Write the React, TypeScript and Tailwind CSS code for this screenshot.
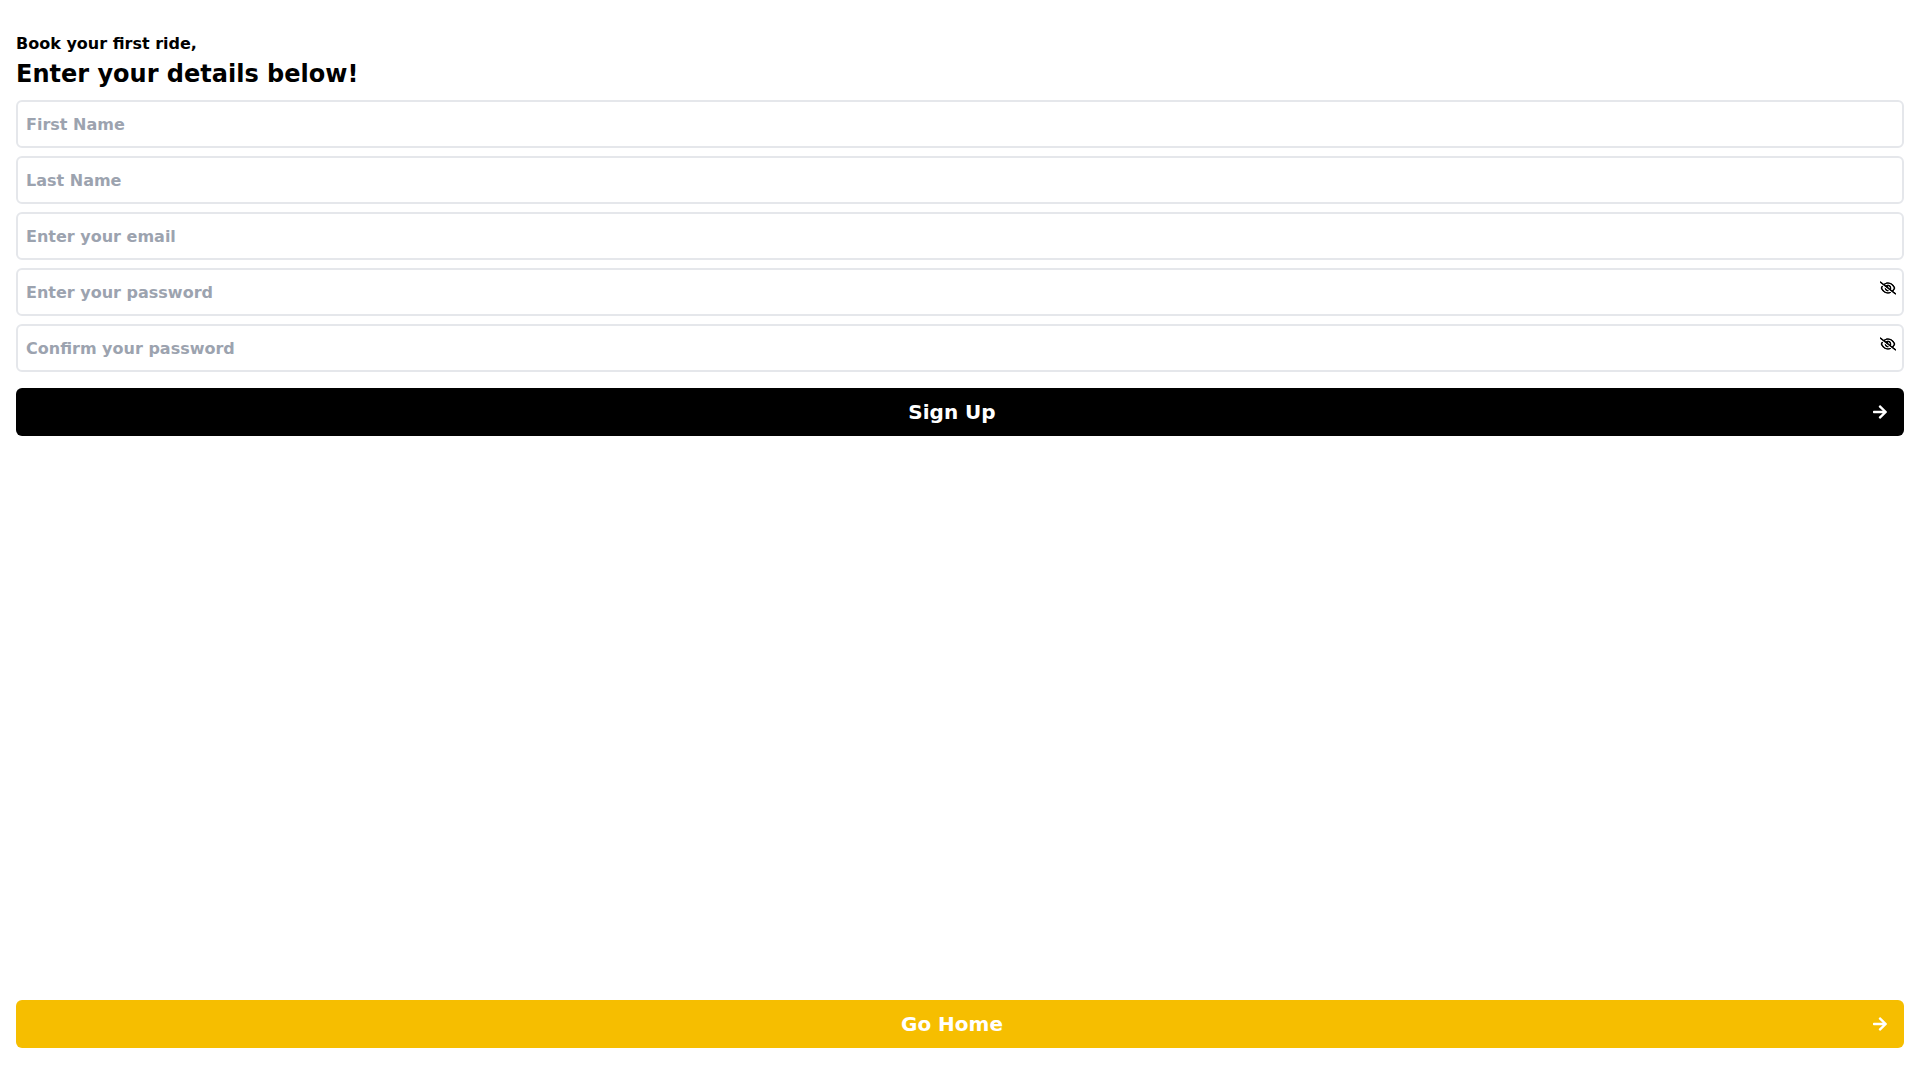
import { useState } from "react";
import { FaArrowRight } from "react-icons/fa";
import { FaRegEye, FaRegEyeSlash } from "react-icons/fa6";

const fieldClass =
  "h-12 w-full rounded-md border-2 border-[#e5e7eb] bg-white px-2 leading-[normal] font-semibold outline-none placeholder:text-[#9ca3af]";

function Field({ label, type = "text" }: { label: string; type?: string }) {
  return <input type={type} aria-label={label} placeholder={label} className={fieldClass} />;
}

function PasswordField({ label }: { label: string }) {
  const [visible, setVisible] = useState(false);
  const Icon = visible ? FaRegEye : FaRegEyeSlash;
  return (
    <div className="relative">
      <input
        type={visible ? "text" : "password"}
        aria-label={label}
        placeholder={label}
        className={fieldClass}
      />
      <button
        type="button"
        aria-label={`Show or hide: ${label}`}
        onClick={() => setVisible(!visible)}
        className="absolute top-3 right-2"
      >
        <Icon className="size-4 drop-shadow-[0_0_0_#000000]" />
      </button>
    </div>
  );
}

export default function App() {
  return (
    <main className="flex min-h-screen flex-col justify-between px-4 py-8 font-['DejaVu_Sans',sans-serif] text-black">
      <form className="flex flex-col gap-2" onSubmit={(e) => e.preventDefault()}>
        <h1 className="font-semibold">
          Book your first ride,
          <span className="block text-2xl leading-9">Enter your details below!</span>
        </h1>
        <Field label="First Name" />
        <Field label="Last Name" />
        <Field label="Enter your email" type="email" />
        <PasswordField label="Enter your password" />
        <PasswordField label="Confirm your password" />
        <button
          type="submit"
          className="mt-2 flex w-full items-center justify-between rounded-md bg-black px-4 py-2.5 text-xl font-semibold text-white"
        >
          <span className="flex-1 text-center">Sign Up</span>
          <FaArrowRight className="size-4" />
        </button>
      </form>
      <a
        href="#home"
        className="flex w-full items-center justify-between rounded-md bg-[#f6be00] px-4 py-2.5 text-xl font-semibold text-white"
      >
        <span className="flex-1 text-center">Go Home</span>
        <FaArrowRight className="size-4" />
      </a>
    </main>
  );
}
